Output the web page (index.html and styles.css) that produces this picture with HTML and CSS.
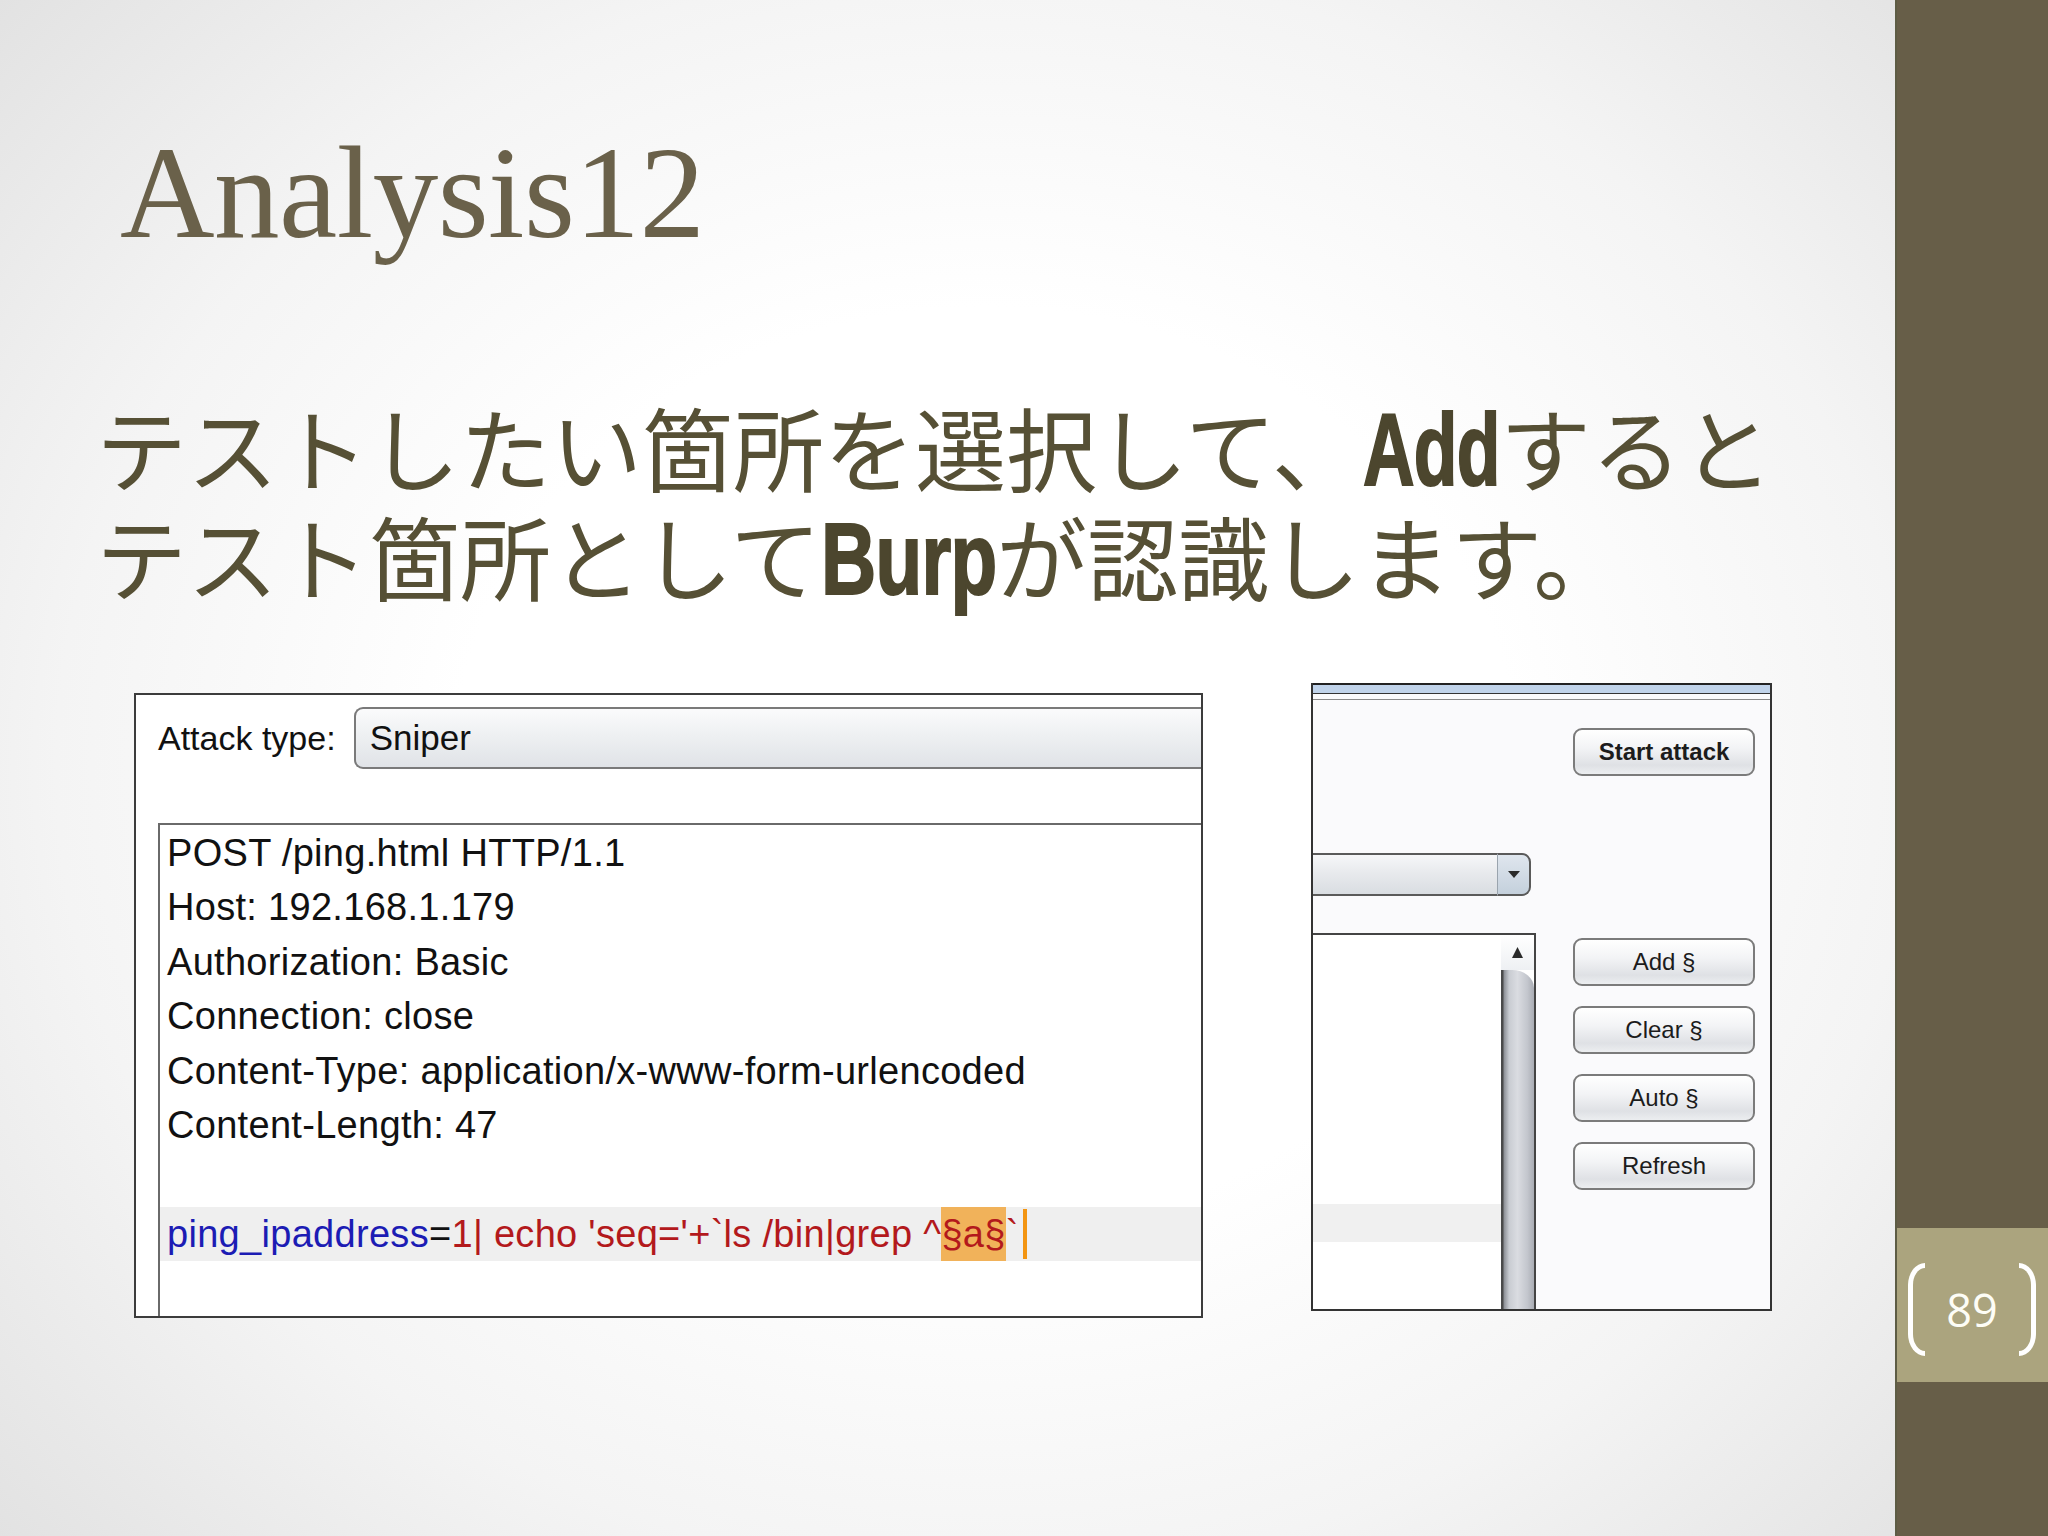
FILE: index.html
```html
<!DOCTYPE html>
<html lang="ja">
<head>
<meta charset="utf-8">
<title>Analysis12</title>
<link rel="stylesheet" href="styles.css">
</head>
<body>
<div class="page">
  <main class="slide">
    <h1 class="title">Analysis12</h1>
    <p class="lead">テストしたい箇所を選択して、<b class="en en-add">Add</b>すると<br>テスト箇所として<b class="en en-burp">Burp</b>が認識します。</p>
    <div class="shots">
      <div class="shot-left">
        <div class="attack-row">
          <span class="attack-label">Attack type:</span>
          <div class="combo">Sniper</div>
        </div>
        <div class="editor">
          <div class="line">POST /ping.html HTTP/1.1</div>
          <div class="line">Host: 192.168.1.179</div>
          <div class="line">Authorization: Basic</div>
          <div class="line">Connection: close</div>
          <div class="line">Content-Type: application/x-www-form-urlencoded</div>
          <div class="line">Content-Length: 47</div>
          <div class="line"></div>
          <div class="line hl"><span class="k">ping_ipaddress</span><span class="eq">=</span><span class="v">1| echo 'seq='+`ls /bin|grep ^</span><span class="mark">§a§</span><span class="v">`</span><span class="caret"></span></div>
        </div>
      </div>
      <div class="shot-right">
        <div class="rp-top"></div>
        <div class="rp-body">
          <div class="rp-left">
            <div class="dropdown">
              <div class="dd-field"></div>
              <div class="dd-btn"><svg width="14" height="9" viewBox="0 0 14 9"><path d="M1 1 H13 L7 8 Z" fill="#2a2a2a"/></svg></div>
            </div>
            <div class="list">
              <div class="list-area"><div class="list-row"></div></div>
              <div class="scroll">
                <div class="scroll-up"><svg width="13" height="13" viewBox="0 0 13 13"><path d="M6.5 1 L12 12 H1 Z" fill="#2a2a2a"/></svg></div>
                <div class="scroll-thumb"></div>
              </div>
            </div>
          </div>
          <div class="rp-buttons">
            <div class="btn start">Start attack</div>
            <div class="btn-group">
              <div class="btn">Add §</div>
              <div class="btn">Clear §</div>
              <div class="btn">Auto §</div>
              <div class="btn">Refresh</div>
            </div>
          </div>
        </div>
      </div>
    </div>
  </main>
  <aside class="sidebar">
    <div class="pagenum">
      <span class="br br-l"></span>
      <span class="num">89</span>
      <span class="br br-r"></span>
    </div>
  </aside>
</div>
</body>
</html>
```

FILE: styles.css
```css
html, body {
  margin: 0;
  padding: 0;
}

.page {
  display: flex;
  width: 2048px;
  height: 1536px;
  overflow: hidden;
}

.slide {
  width: 1895px;
  height: 1536px;
  flex: none;
  display: flex;
  flex-direction: column;
  background: radial-gradient(ellipse 70% 75% at 52% 50%, #ffffff 40%, #f4f4f4 70%, #e2e2e2 100%);
}

.title {
  margin: 127px 0 0 120px;
  font-family: "Liberation Serif", serif;
  font-weight: normal;
  font-size: 131px;
  line-height: 131px;
  letter-spacing: -0.5px;
  color: #6a614a;
}

.lead {
  margin: 133px 0 0 96px;
  font-family: "Noto Sans CJK JP", sans-serif;
  font-size: 91px;
  line-height: 109px;
  color: #565035;
  white-space: nowrap;
}

.en {
  display: inline-block;
  font-family: "Liberation Sans", Arial, sans-serif;
  font-weight: bold;
  font-size: 102px;
  line-height: 100px;
  letter-spacing: -1px;
  color: #4c462e;
  -webkit-text-stroke: 2px #4c462e;
  transform-origin: left center;
}

.en-add {
  transform: scaleX(0.70);
  margin-right: -58px;
}

.en-burp {
  transform: scaleX(0.75);
  margin-right: -59px;
}

.shots {
  display: flex;
  align-items: flex-start;
  margin-top: 74px;
}

/* Left screenshot */
.shot-left {
  margin: 10px 0 0 134px;
  width: 1065px;
  height: 621px;
  border: 2px solid #3c3c3c;
  background: #ffffff;
  overflow: hidden;
  font-family: "Liberation Sans", Arial, sans-serif;
  color: #111;
}

.attack-row {
  display: flex;
  align-items: center;
  margin-top: 12px;
  height: 62px;
}

.attack-label {
  margin-left: 22px;
  font-size: 34px;
}

.combo {
  flex: 1;
  margin-left: 18px;
  height: 58px;
  border: 2px solid #7a7a7a;
  border-right: none;
  border-radius: 9px 0 0 9px;
  background: linear-gradient(#fbfbfc, #eef0f2 45%, #e0e3e7);
  padding-left: 14px;
  display: flex;
  align-items: center;
  font-size: 35px;
}

.editor {
  margin: 54px 0 0 22px;
  height: 600px;
  border-top: 2px solid #6a6a6a;
  border-left: 2px solid #6a6a6a;
  padding: 1px 0 0 7px;
  font-size: 38px;
  line-height: 54.4px;
  letter-spacing: 0.3px;
}

.line {
  height: 54.4px;
  white-space: pre;
}

.line.hl {
  margin-left: -7px;
  padding-left: 7px;
  background: #efefef;
}

.k { color: #1c1cb4; }
.eq { color: #111; }
.v { color: #b3191c; }

.mark {
  display: inline-block;
  height: 54.4px;
  background: #f1b25a;
  color: #b3191c;
}

.caret {
  display: inline-block;
  width: 4px;
  height: 50px;
  margin-left: 4px;
  vertical-align: -12px;
  background: #f39512;
}

/* Right screenshot */
.shot-right {
  margin-left: 108px;
  width: 457px;
  height: 626px;
  border: 2px solid #333;
  border-top: none;
  background: #fafafc;
  display: flex;
  flex-direction: column;
  font-family: "Liberation Sans", Arial, sans-serif;
}

.rp-top {
  height: 17px;
  flex: none;
  background: linear-gradient(to bottom, #222 0, #222 2px, #c0d3ea 2px, #c0d3ea 10px, #333 10px, #333 11px, #fafafc 11px, #fafafc 16px, #8a8a8a 16px, #8a8a8a 17px);
}

.rp-body {
  flex: 1;
  display: flex;
}

.rp-left {
  width: 223px;
  display: flex;
  flex-direction: column;
}

.dropdown {
  margin-top: 153px;
  width: 218px;
  height: 43px;
  display: flex;
}

.dd-field {
  flex: 1;
  border-top: 2px solid #5a5a5a;
  border-bottom: 2px solid #5a5a5a;
  background: linear-gradient(#f6f7f9, #e8eaed 45%, #d9dde2);
}

.dd-btn {
  width: 31px;
  border: 2px solid #5a5a5a;
  border-left: 1px solid #9aa4ae;
  border-radius: 0 9px 9px 0;
  background: linear-gradient(#dfe6ee, #c4d0dc);
  display: flex;
  align-items: center;
  justify-content: center;
}

.list {
  margin-top: 37px;
  flex: 1;
  display: flex;
  border-top: 2px solid #444;
  border-right: 2px solid #444;
  background: #ffffff;
}

.list-area {
  flex: 1;
}

.list-row {
  margin-top: 269px;
  height: 38px;
  background: #f0f0f0;
}

.scroll {
  width: 33px;
  display: flex;
  flex-direction: column;
  background: #ffffff;
}

.scroll-up {
  height: 35px;
  background: linear-gradient(#ffffff, #eef0f3);
  display: flex;
  align-items: center;
  justify-content: center;
}

.scroll-thumb {
  flex: 1;
  border-top-right-radius: 22px 18px;
  background: linear-gradient(to right, #4a4a4a 0, #4a4a4a 2px, #8d9096 3px, #c9ccd2 25%, #dadce1 50%, #c3c6cd 80%, #a9acb4 100%);
}

.rp-buttons {
  margin-left: 37px;
  width: 182px;
  display: flex;
  flex-direction: column;
}

.btn {
  height: 48px;
  box-sizing: border-box;
  border: 2px solid #7b7b7b;
  border-radius: 9px;
  background: linear-gradient(#ffffff, #f3f4f6 40%, #dfe1e5 80%, #eceef0);
  display: flex;
  align-items: center;
  justify-content: center;
  font-size: 24px;
  color: #1c1c1c;
}

.btn.start {
  margin-top: 28px;
  font-weight: bold;
}

.btn-group {
  margin-top: 162px;
  display: flex;
  flex-direction: column;
  gap: 20px;
}

/* Sidebar */
.sidebar {
  width: 153px;
  flex: none;
  height: 1536px;
  box-sizing: border-box;
  border-left: 2px solid #5d5c44;
  background: #675e48;
}

.pagenum {
  margin-top: 1228px;
  height: 154px;
  box-sizing: border-box;
  padding: 8px 12px 0 11px;
  background: #aba47e;
  display: flex;
  align-items: center;
  justify-content: space-between;
}

.br {
  width: 12px;
  height: 83px;
  border: 5px solid #ffffff;
}

.br-l {
  border-right: none;
  border-radius: 20px 0 0 20px / 26px 0 0 26px;
}

.br-r {
  border-left: none;
  border-radius: 0 20px 20px 0 / 0 26px 26px 0;
}

.num {
  font-family: "Open Sans", sans-serif;
  font-size: 45px;
  line-height: 1;
  color: #fdfdf6;
}
```
